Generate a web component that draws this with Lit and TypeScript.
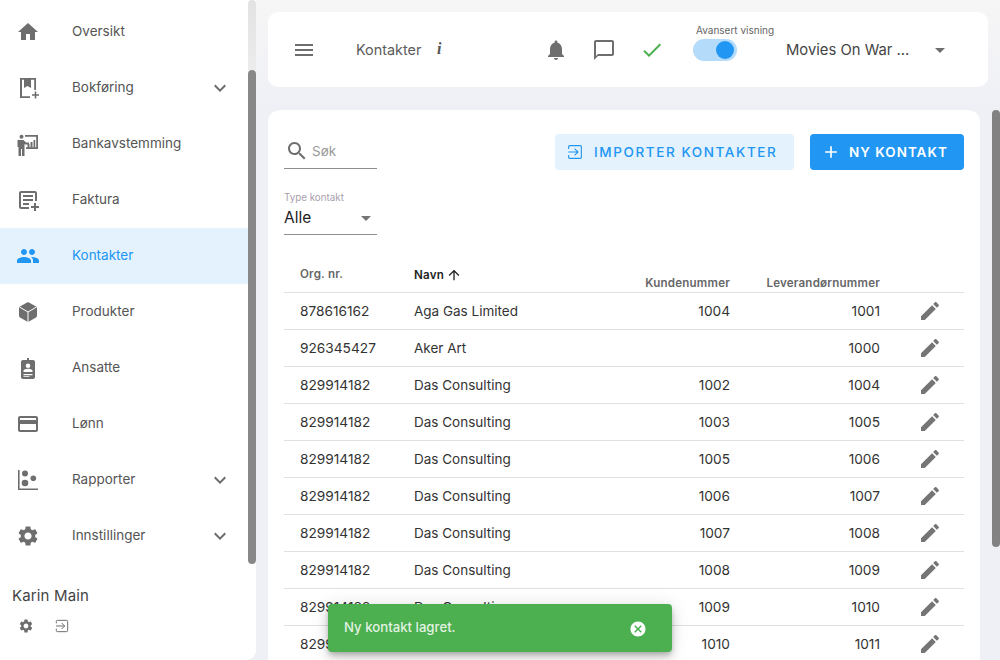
import { LitElement, html, css, svg } from "lit";
import { customElement } from "lit/decorators.js";

const P = {
  home: svg`<path d="M10 20v-6h4v6h5v-8h3L12 3 2 12h3v8z"/>`,
  book: svg`<path d="M4 2h16v12h-1.800V3.800H6V20.200h8V22H4z"/><path d="M8 3h7v9l-3.500-2L8 12z"/><path d="M18.700 15.500h1.600v2.700H23v1.600h-2.700v2.700h-1.600v-2.700H16v-1.600h2.700z"/>`,
  bank: svg`<circle cx="5.500" cy="4.800" r="2"/><path d="M1.500 8h6l2.500 2.500h3v2H9.200L8.500 12v12H6v-7H5v7H2.500v-9h-1zM9 3h13v14H10v-1.800h10.200V4.800H9z"/><path d="M11.500 12h2v4h-2zM14.500 10h2v6h-2zM17.500 8h1.700v8h-1.700z" />`,
  invoice: svg`<path d="M5 3h14c1.100 0 2 .9 2 2v8h-2V5H5v14h8v2H5c-1.100 0-2-.9-2-2V5c0-1.100.9-2 2-2zM7 7h10v2H7zM7 11h10v2H7zM7 15h6v2H7zM18 15h2v3h3v2h-3v3h-2v-3h-3v-2h3z"/>`,
  people: svg`<path d="M16 11c1.660 0 2.990-1.340 2.990-3S17.660 5 16 5c-1.660 0-3 1.340-3 3s1.340 3 3 3zm-8 0c1.660 0 2.990-1.340 2.990-3S9.660 5 8 5C6.340 5 5 6.340 5 8s1.340 3 3 3zm0 2c-2.330 0-7 1.170-7 3.500V19h14v-2.500c0-2.330-4.670-3.500-7-3.500zm8 0c-.29 0-.62.02-.97.05 1.160.84 1.970 1.970 1.970 3.450V19h6v-2.500c0-2.330-4.670-3.500-7-3.500z"/>`,
  cube: svg`<path d="M11 2.500a2 2 0 0 1 2 0l7 4a2 2 0 0 1 1 1.700v7.600a2 2 0 0 1-1 1.700l-7 4a2 2 0 0 1-2 0l-7-4a2 2 0 0 1-1-1.700V8.200a2 2 0 0 1 1-1.700z"/><path d="M3.500 7L12 12l8.500-5M12 12v10" fill="none" stroke="#fff" stroke-width="1"/>`,
  badge: svg`<path d="M11 2h2v2h4c1.100 0 2 .9 2 2v15c0 1.100-.9 2-2 2H7c-1.100 0-2-.9-2-2V6c0-1.100.9-2 2-2h4zM12 7.500a2.300 2.300 0 1 0 0 4.600 2.300 2.300 0 0 0 0-4.600zM7.500 16h9v-1.200c0-1.300-3-2-4.500-2s-4.500.7-4.500 2zM7.500 18v1.300h9V18zM7.500 20.300v.7h6v-.7z"/>`,
  card: svg`<path d="M20 4H4c-1.110 0-1.990.89-1.990 2L2 18c0 1.110.89 2 2 2h16c1.110 0 2-.89 2-2V6c0-1.110-.89-2-2-2zm0 14H4v-6h16v6zm0-10H4V6h16v2z"/>`,
  report: svg`<path d="M2 2h1.600v18.400H22V22H2z"/><circle cx="9" cy="5.500" r="3"/><circle cx="9" cy="15" r="3.300"/><circle cx="17.300" cy="10.300" r="2.800"/>`,
  gear: svg`<path d="M19.140 12.940c.04-.3.06-.61.06-.94 0-.32-.02-.64-.07-.94l2.030-1.580c.18-.14.23-.41.12-.61l-1.920-3.320c-.12-.22-.37-.29-.59-.22l-2.390.96c-.5-.38-1.030-.7-1.620-.94l-.36-2.540c-.04-.24-.24-.41-.48-.41h-3.840c-.24 0-.43.17-.47.41l-.36 2.540c-.59.24-1.130.57-1.620.94l-2.390-.96c-.22-.08-.47 0-.59.22L2.740 8.870c-.12.21-.08.47.12.61l2.030 1.580c-.05.3-.09.63-.09.94s.02.64.07.94l-2.030 1.580c-.18.14-.23.41-.12.61l1.920 3.320c.12.22.37.29.59.22l2.390-.96c.5.38 1.030.7 1.620.94l.36 2.540c.05.24.24.41.48.41h3.840c.24 0 .44-.17.47-.41l.36-2.540c.59-.24 1.130-.56 1.620-.94l2.390.96c.22.08.47 0 .59-.22l1.920-3.320c.12-.22.07-.47-.12-.61l-2.010-1.580zM12 15.600c-1.980 0-3.600-1.620-3.600-3.600s1.620-3.600 3.600-3.600 3.600 1.620 3.600 3.600-1.620 3.600-3.600 3.600z"/>`,
  exit: svg`<path d="M3.500 8V5A1.500 1.500 0 0 1 5 3.500h14A1.500 1.500 0 0 1 20.500 5v14a1.500 1.500 0 0 1-1.500 1.500H5A1.500 1.500 0 0 1 3.500 19v-3M3 12h13M11.500 7.500L16 12l-4.500 4.500" fill="none" stroke="currentColor" stroke-width="1.500"/>`,
  chevron: svg`<path d="M16.590 8.590L12 13.170 7.410 8.590 6 10l6 6 6-6z"/>`,
  menu: svg`<path d="M3 18h18v-2H3v2zm0-5h18v-2H3v2zm0-7v2h18V6H3z"/>`,
  bell: svg`<path d="M12 22c1.100 0 2-.9 2-2h-4c0 1.100.9 2 2 2zm6-6v-5c0-3.070-1.630-5.640-4.500-6.320V4c0-.83-.67-1.500-1.500-1.500s-1.500.67-1.500 1.500v.68C7.640 5.360 6 7.920 6 11v5l-2 2v1h16v-1l-2-2z"/>`,
  chat: svg`<path d="M20 2H4c-1.100 0-2 .9-2 2v18l4-4h14c1.100 0 2-.9 2-2V4c0-1.100-.9-2-2-2zm0 14H6l-2 2V4h16v12z"/>`,
  check: svg`<path d="M9 16.170L4.830 12l-1.420 1.410L9 19 21 7l-1.410-1.410z"/>`,
  search: svg`<path d="M15.500 14h-.79l-.28-.27C15.410 12.590 16 11.110 16 9.500 16 5.910 13.090 3 9.500 3S3 5.910 3 9.500 5.910 16 9.500 16c1.610 0 3.090-.59 4.230-1.570l.27.28v.79l5 4.990L20.490 19l-4.990-5zm-6 0C7.010 14 5 11.990 5 9.500S7.010 5 9.500 5 14 7.010 14 9.500 11.990 14 9.500 14z"/>`,
  edit: svg`<path d="M3 17.250V21h3.750L17.810 9.940l-3.750-3.750L3 17.250zM20.710 7.040c.39-.39.39-1.020 0-1.410l-2.340-2.340c-.39-.39-1.020-.39-1.410 0l-1.830 1.830 3.750 3.750 1.830-1.830z"/>`,
  up: svg`<path d="M4 12l1.410 1.410L11 7.830V20h2V7.830l5.580 5.590L20 12l-8-8-8 8z"/>`,
  plus: svg`<path d="M19 13h-6v6h-2v-6H5v-2h6V5h2v6h6v2z"/>`,
  cancel: svg`<path d="M12 2C6.470 2 2 6.470 2 12s4.470 10 10 10 10-4.470 10-10S17.530 2 12 2zm5 13.590L15.590 17 12 13.410 8.410 17 7 15.590 10.590 12 7 8.410 8.410 7 12 10.590 15.590 7 17 8.410 13.410 12 17 15.590z"/>`,
  caret: svg`<path d="M7 10l5 5 5-5z"/>`,
};

function icon(p: unknown, cls = "") {
  return html`<svg class="ic ${cls}" viewBox="0 0 24 24" fill="currentColor">${p}</svg>`;
}

const NAV = [
  ["Oversikt", P.home, false],
  ["Bokføring", P.book, true],
  ["Bankavstemming", P.bank, false],
  ["Faktura", P.invoice, false],
  ["Kontakter", P.people, false, true],
  ["Produkter", P.cube, false],
  ["Ansatte", P.badge, false],
  ["Lønn", P.card, false],
  ["Rapporter", P.report, true],
  ["Innstillinger", P.gear, true],
] as const;

const ROWS = [
  ["878616162", "Aga Gas Limited", "1004", "1001"],
  ["926345427", "Aker Art", "", "1000"],
  ["829914182", "Das Consulting", "1002", "1004"],
  ["829914182", "Das Consulting", "1003", "1005"],
  ["829914182", "Das Consulting", "1005", "1006"],
  ["829914182", "Das Consulting", "1006", "1007"],
  ["829914182", "Das Consulting", "1007", "1008"],
  ["829914182", "Das Consulting", "1008", "1009"],
  ["829914182", "Das Consulting", "1009", "1010"],
  ["829914182", "Das Consulting", "1010", "1011"],
];

@customElement("app-root")
export class AppRoot extends LitElement {
  static styles = css`
    :host { display: block; width: 1000px; height: 660px; overflow: hidden; position: relative;
      font-family: Inter, "Liberation Sans", sans-serif; color: #3c3c3c;
      background: linear-gradient(#f6f6f6 0, #eff0f6 110px); }
    * { box-sizing: border-box; }
    .ic { display: block; width: 24px; height: 24px; flex: none; }
    .shell { display: flex; height: 660px; }
    .side { width: 256px; flex: none; height: 660px; display: flex; background: #fff; border-radius: 0 0 10px 0; overflow: hidden; }
    .side-main { width: 248px; flex: none; padding-top: 4px; }
    .track { width: 8px; height: 660px; background: #fff; }
    .track.top { background: linear-gradient(#e2e2e2 0, #ececec 70px, #fff 70px); border-radius: 4px 4px 0 0; }
    .thumb { display: block; width: 8px; background: #888; border-radius: 4px; }
    .side .thumb { margin-top: 70px; height: 494px; }
    .nav-item { height: 56px; display: flex; align-items: center; padding-left: 16px; font-size: 13.5px; color: #555; }
    .nav-item .label { margin-top: -2px; margin-left: 32px; flex: 1; }
    .nav-item .ic { color: #6e6e6e; }
    .nav-item .chev { margin-right: 16px; color: #6e6e6e; }
    .nav-item.active { background: #e3f2fd; color: #2196f3; }
    .nav-item.active .ic { color: #2196f3; }
    .user { padding: 23px 0 0 12px; }
    .user-name { font-size: 15px; line-height: 18px; color: #444; letter-spacing: .15px; }
    .user-icons { display: flex; gap: 20px; margin-top: 13px; padding-left: 6px; color: #6e6e6e; }
    .user-icons .ic { width: 16px; height: 16px; }
    .content { flex: 1; min-width: 0; padding: 12px 0 0 12px; display: flex; flex-direction: column; gap: 23px; }
    .topbar { height: 75px; width: 720px; background: #fff; border-radius: 10px; display: flex; align-items: center; flex: none; padding: 0 30px 0 24px; color: #6e6e6e; }
    .title { margin-left: 40px; margin-top: -1px; font-size: 14.4px; color: #5c5c5c; width: 81px; }
    .info { font-family: "Liberation Serif", serif; font-style: italic; font-weight: 700; font-size: 16px; color: #555; width: 107px; margin-top: -1px; }
    .top-icons { display: flex; gap: 24px; }
    .check { color: #4caf50; }
    .switch-wrap { margin-left: 29px; position: relative; width: 93px; height: 22px; }
    .switch-label { position: absolute; top: -15px; left: 3px; font-size: 10px; line-height: 12px; color: #666; white-space: nowrap; }
    .switch { width: 44px; height: 22px; border-radius: 11px; background: #b5dbfa; display: flex; justify-content: flex-end; align-items: center; padding-right: 3px; }
    .knob { width: 18px; height: 18px; border-radius: 50%; background: #2196f3; }
    .company { font-size: 14.8px; color: #444; width: 142px; white-space: nowrap; }
    .main-row { display: flex; flex: 1; min-height: 0; }
    .card { width: 712px; background: #fff; border-radius: 12px 12px 0 0; padding: 24px 16px 0; flex: none; overflow: hidden; }
    .main-spacer { flex: 1; }
    .page-track { width: 8px; flex: none; }
    .page-track .thumb { height: 437px; background: #828282; }
    .tools { display: flex; align-items: flex-start; }
    .search { width: 93px; height: 35px; border-bottom: 1px solid #8e8e8e; display: flex; align-items: center; padding-left: 1px; color: #6e6e6e; gap: 3px; }
    .search span { font-size: 13.5px; color: #9a9a9a; margin-top: -1px; }
    .btn { height: 36px; border-radius: 4px; display: flex; align-items: center; font-size: 13.500px; font-weight: 500; }
    .btn .ic { width: 18px; height: 18px; }
    .btn.light { margin-left: auto; width: 239px; background: #e3f2fd; color: #2196f3; padding-left: 11px; gap: 10px; letter-spacing: 1.6px; }
    .btn.primary { margin-left: 16px; width: 154px; background: #2196f3; color: #fff; padding-left: 11px; gap: 8px; font-weight: 600; letter-spacing: 1px; }
    .btn.primary .ic { width: 20px; height: 20px; }
    .select { width: 93px; height: 44px; margin-top: 21px; border-bottom: 1px solid #8e8e8e; }
    .select-label { font-size: 9.8px; line-height: 12px; color: #a9a0ad; padding-top: 1px; }
    .select-row { display: flex; justify-content: space-between; align-items: center; font-size: 15.5px; line-height: 22px; color: #222; padding-top: 2px; }
    .select-row .ic { color: #757575; margin-right: -1px; }
    table { border-collapse: collapse; width: 680px; table-layout: fixed; margin-top: 20px; }
    th { height: 37px; font-size: 11.6px; font-weight: 600; color: #666; text-align: left; padding: 0 0 0 16px; border-bottom: 1px solid #e0e0e0; vertical-align: top; letter-spacing: .2px; }
    th.tl { padding-top: 12px; line-height: 14px; }
    th.r, td.r { text-align: right; padding-left: 0; padding-right: 0; }
    th.r { padding-top: 21px; line-height: 14px; }
    th.active { color: #222; }
    .sort { display: inline-flex; align-items: center; gap: 2px; }
    .sort .ic { width: 16px; height: 16px; color: #222; }
    td { height: 37px; font-size: 13.5px; color: #333; padding: 0 0 0 16px; border-bottom: 1px solid #e0e0e0; white-space: nowrap; }
    td.num { font-size: 13.7px; }
    .edit { color: #757575; display: flex; justify-content: flex-end; padding-right: 22px; }
    .toast { position: absolute; left: 328px; top: 604px; width: 344px; height: 48px; background: #4caf50; border-radius: 4px;
      box-shadow: 0 3px 5px -1px rgba(0,0,0,.2), 0 6px 10px 0 rgba(0,0,0,.14), 0 1px 18px 0 rgba(0,0,0,.12);
      display: flex; align-items: center; justify-content: space-between; padding: 0 25px 0 16px; color: rgba(255,255,255,.85); font-size: 13.2px; font-weight: 500; }
    .toast span { margin-top: -2px; }
    .toast .ic { width: 18px; height: 18px; color: #fff; margin-top: 1px; }
  `;

  render() {
    return html`
      <div class="shell">
        <aside class="side">
          <div class="side-main">
            <nav>
              ${NAV.map((n) => html`
                <div class="nav-item ${n[3] ? "active" : ""}">
                  ${icon(n[1])}
                  <span class="label">${n[0]}</span>
                  ${n[2] ? icon(P.chevron, "chev") : ""}
                </div>`)}
            </nav>
            <div class="user">
              <div class="user-name">Karin Main</div>
              <div class="user-icons">${icon(P.gear)}${icon(P.exit)}</div>
            </div>
          </div>
          <div class="track top"><span class="thumb"></span></div>
        </aside>
        <main class="content">
          <header class="topbar">
            ${icon(P.menu)}
            <span class="title">Kontakter</span>
            <span class="info">i</span>
            <div class="top-icons">
              ${icon(P.bell)}${icon(P.chat)}${icon(P.check, "check")}
            </div>
            <div class="switch-wrap">
              <span class="switch-label">Avansert visning</span>
              <div class="switch"><span class="knob"></span></div>
            </div>
            <span class="company">Movies On War ...</span>
            ${icon(P.caret)}
          </header>
          <div class="main-row">
            <section class="card">
              <div class="tools">
                <div class="search">${icon(P.search)}<span>Søk</span></div>
                <div class="btn light">${icon(P.exit)}IMPORTER KONTAKTER</div>
                <div class="btn primary">${icon(P.plus)}NY KONTAKT</div>
              </div>
              <div class="select">
                <div class="select-label">Type kontakt</div>
                <div class="select-row"><span>Alle</span>${icon(P.caret)}</div>
              </div>
              <table>
                <colgroup><col style="width:114px" /><col style="width:216px" /><col style="width:116px" /><col style="width:150px" /><col /></colgroup>
                <thead><tr>
                  <th class="tl">Org. nr.</th>
                  <th class="tl active"><span class="sort">Navn ${icon(P.up)}</span></th>
                  <th class="r">Kundenummer</th>
                  <th class="r">Leverandørnummer</th>
                  <th></th>
                </tr></thead>
                <tbody>
                  ${ROWS.map((r) => html`<tr>
                    <td class="num">${r[0]}</td><td>${r[1]}</td><td class="r num">${r[2]}</td><td class="r num">${r[3]}</td>
                    <td><div class="edit">${icon(P.edit)}</div></td>
                  </tr>`)}
                </tbody>
              </table>
            </section>
            <div class="main-spacer"></div>
            <div class="page-track"><span class="thumb"></span></div>
          </div>
        </main>
      </div>
      <div class="toast"><span>Ny kontakt lagret.</span>${icon(P.cancel)}</div>
    `;
  }
}
